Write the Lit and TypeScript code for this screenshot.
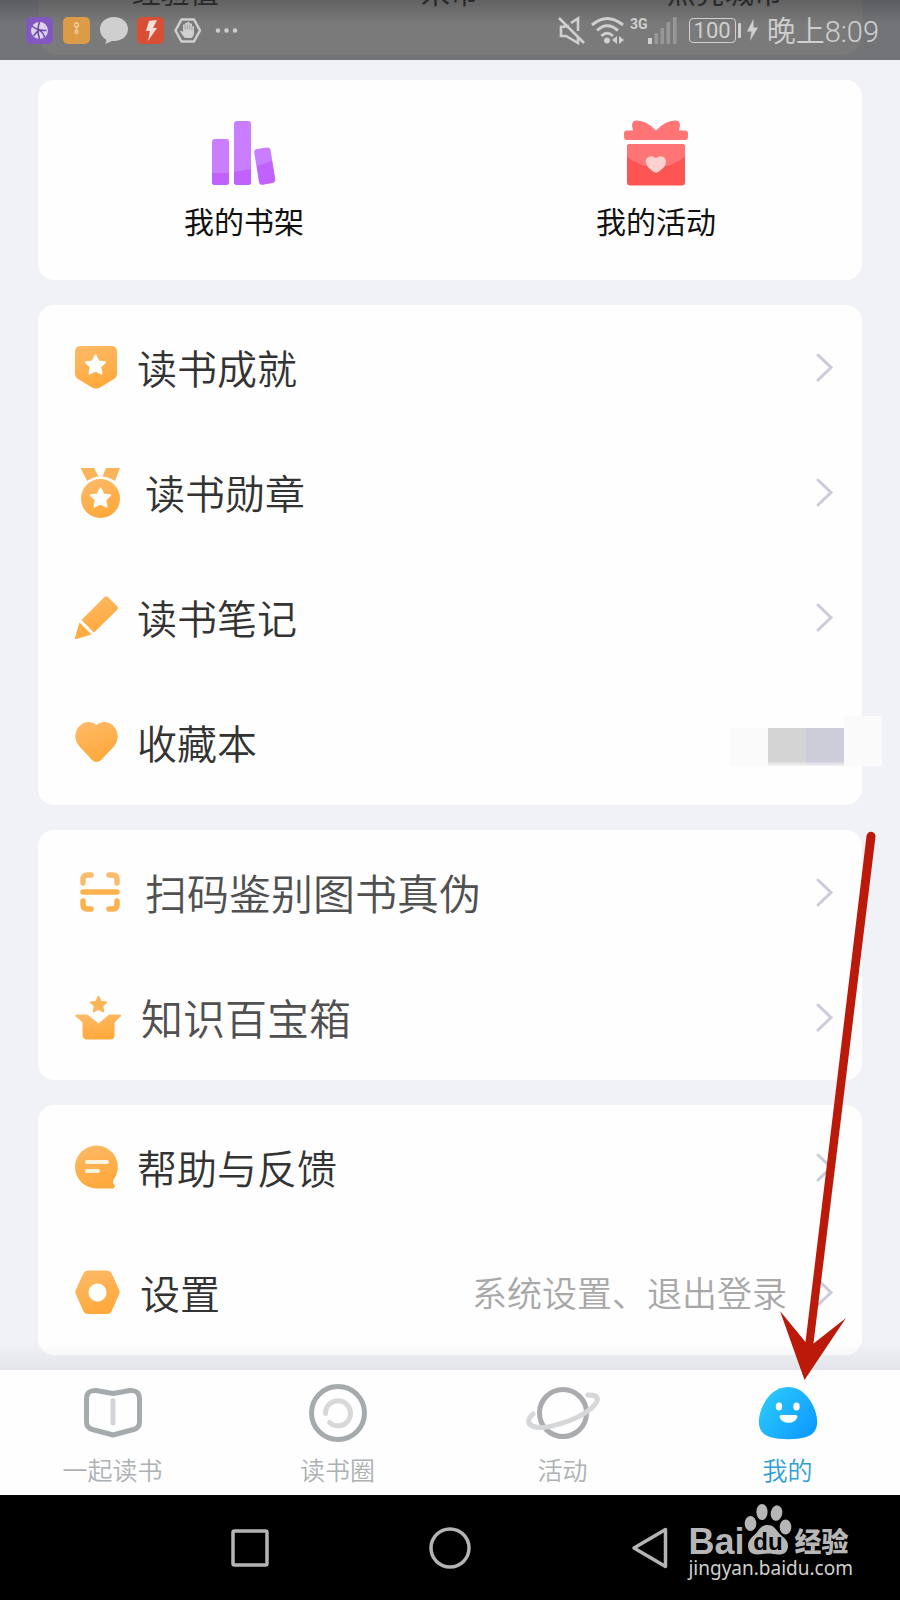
import { LitElement, html, css, svg, nothing, TemplateResult } from "lit";
import { customElement, state } from "lit/decorators.js";

interface Row {
  label: string;
  icon: TemplateResult;
  iconWidth: number;
  note?: string;
  masked?: boolean;
}

interface Section {
  tone: "dark" | "soft";
  rows: Row[];
}

const STAR =
  "M0 -9.5L3 -3.6 9.6 -2.8 4.8 1.8 6 8.6 0 5.4 -6 8.6 -4.8 1.8 -9.6 -2.8 -3 -3.6Z";

const badge = svg`
  <path fill="url(#amber)" d="M5 3H37a5 5 0 0 1 5 5V31q0 3-3 5L25 44.500q-4 2-8 0L3 36q-3-2-3-5V8a5 5 0 0 1 5-5Z"/>
  <path class="star" transform="translate(20.500 22)" d=${STAR}/>`;
const medal = svg`
  <path fill="#fcb45c" d="M5.700 0H19L23.500 8.500Q17 9 12 13ZM31 0H45L40 13Q34 9 27.500 8.500Z"/>
  <circle fill="url(#amber)" cx="25.500" cy="30.500" r="19.500"/>
  <path class="star" transform="translate(25.500 30)" d=${STAR}/>`;
const pencil = svg`
  <path fill="url(#amber)" d="M29 4.500q2-2.500 4.500 0L42 13q2 2 0 4L19 39.500 6.500 27Z"/>
  <path fill="#ffac45" d="M4.500 29.500 16.500 41.500 1.500 46q-2 .300-1.500-1.500Z"/>`;
const heart = svg`
  <path fill="url(#amber)" d="M21.500 7C26 3 33 3 38 7.500 44.500 14 44 23 38.500 29L26 42q-4.500 4-9 0L5 29C-1 23-1.500 14 5 7.500 10 3 17 3 21.500 7Z"/>`;
const scan = svg`
  <g fill="none" stroke="#fbb24f" stroke-width="5.500" stroke-linecap="round" stroke-linejoin="round">
    <path stroke="#f9bb6c" d="M8 15v-3.500q0-4.500 4.500-4.500H16M34 7h3.500Q42 7 42 11.500V15"/>
    <path d="M8 24H42M8 33v3.500q0 4.500 4.500 4.500H16M34 41h3.500q4.500 0 4.500-4.500V33"/>
  </g>`;
const chest = svg`
  <path fill="#fcb659" stroke="#fcb659" stroke-width="2" stroke-linejoin="round" transform="translate(23.500 11.500) scale(.82)" d=${STAR}/>
  <path fill="url(#amber)" d="M1.500 21.500H11q1.500 0 2.500 1L23.500 30.500 33 22.500q1-1 2.500-1H45q2 1 0 2.500L39.500 29.500V42q0 4.500-4.500 4.500H12q-4.500 0-4.500-4.500V29.500L1.500 24q-2.500-1.500 0-2.500Z"/>`;
const speech = svg`
  <path fill="url(#amber)" d="M21.500 2.500a21.500 21.500 0 0 1 17 34.500q-1.500 2 .5 4.500t-1 4H21.500a21.500 21.500 0 0 1 0-43Z"/>
  <path fill="none" stroke="#fff4df" stroke-width="4" stroke-linecap="round" d="M12 19H32M12 28H23"/>`;
const nut = svg`
  <path fill="url(#amber)" fill-rule="evenodd" d="M13 2.500H32q3 0 4.500 2.500L44 21.500q1.500 2.500 0 5L36.500 43.500q-1.500 2.500-4.500 2.500H13q-3 0-4.500-2.500L1 26.500q-1.500-2.500 0-5L8.500 5Q10 2.500 13 2.500ZM22.500 15.500a9 9 0 1 0 .01 0Z"/>`;

const SECTIONS: Section[] = [
  {
    tone: "dark",
    rows: [
      { label: "读书成就", icon: badge, iconWidth: 42 },
      { label: "读书勋章", icon: medal, iconWidth: 50 },
      { label: "读书笔记", icon: pencil, iconWidth: 42 },
      { label: "收藏本", icon: heart, iconWidth: 42, masked: true },
    ],
  },
  {
    tone: "soft",
    rows: [
      { label: "扫码鉴别图书真伪", icon: scan, iconWidth: 50 },
      { label: "知识百宝箱", icon: chest, iconWidth: 46 },
    ],
  },
  {
    tone: "dark",
    rows: [
      { label: "帮助与反馈", icon: speech, iconWidth: 42 },
      { label: "设置", icon: nut, iconWidth: 45, note: "系统设置、退出登录" },
    ],
  },
];

const TABS = [
  {
    label: "一起读书",
    icon: svg`
      <g fill="none" stroke-width="5" stroke-linecap="round" stroke-linejoin="round">
        <path stroke="#a5abad" d="M38 10.500 21 7.500Q11.500 7 11.500 16V39q0 6 6 7.500L38 52 58.500 46.500q6-1.500 6-7.500V16Q64.500 7 55 7.500Z"/>
        <path stroke="#d3d6d8" d="M38 17.500V40"/>
      </g>`,
  },
  {
    label: "读书圈",
    icon: svg`
      <g fill="none" stroke-width="5" stroke-linecap="round">
        <circle stroke="#a5abad" cx="38" cy="30" r="26.500"/>
        <path stroke="#d6d8d9" d="M25.500 30.500a12.500 12.500 0 1 1 4 9"/>
      </g>`,
  },
  {
    label: "活动",
    icon: svg`
      <g fill="none" stroke-width="5" stroke-linecap="round">
        <circle stroke="#a9abae" cx="38" cy="30" r="23.500"/>
        <path stroke="#d6d7d9" d="M8 31C-4 42 10 49 34 41 63 33 80 16 69 12.500q-2-.500-6-.500"/>
      </g>`,
  },
  {
    label: "我的",
    icon: svg`
      <path fill="url(#sky)" d="M38 4C51 4 60 14 65 27 70 43 66 51 56 54 46 57 30 57 20 54 10 51 6 43 11 27 16 14 25 4 38 4Z"/>
      <g fill="#fff"><ellipse cx="29" cy="23.500" rx="3.200" ry="4"/><ellipse cx="46.500" cy="23.500" rx="3.200" ry="4"/>
      <path d="M31 32H45.500q2 0 2 2a9.500 8.500 0 0 1-18 0q0-2 1.500-2Z"/></g>`,
  },
];

@customElement("app-root")
export class AppRoot extends LitElement {
  @state() private active = "我的";

  static styles = css`
    :host {
      display: flex;
      flex-direction: column;
      position: relative;
      min-height: 100vh;
      background: #f1f2f7;
      font-family: Roboto, "Noto Sans CJK SC", sans-serif;
      overflow-x: hidden;
    }
    * { box-sizing: border-box; }
    a { color: inherit; text-decoration: none; }
    svg { display: block; flex: none; overflow: visible; }
    button { border: 0; padding: 0; background: none; }

    .status {
      display: grid;
      height: 60px;
      overflow: hidden;
      background: #737478;
    }
    .status > * { grid-area: 1 / 1; min-width: 0; }
    .stats {
      display: grid;
      grid-template-columns: repeat(3, 1fr);
      align-items: start;
      height: 55px;
      margin: 0 38px;
      border-radius: 0 0 20px 20px;
      background: #7a7a7a;
      color: #333;
      font-size: 29px;
      line-height: 30px;
      text-align: center;
    }
    .stats span { margin-top: -21px; }
    .system {
      display: flex;
      align-items: center;
      justify-content: space-between;
      padding: 0 21px 0 26px;
      background: linear-gradient(rgba(0, 0, 0, 0.2), rgba(0, 0, 0, 0) 24px);
      color: #cfcfcf;
    }
    .group { display: flex; align-items: center; gap: 10px; }
    .signals { gap: 6px; }
    .cell { display: flex; }
    .net { font-size: 14px; line-height: 14px; font-weight: 700; }
    .battery { display: flex; align-items: center; gap: 2px; margin-left: 6px; }
    .level {
      padding: 0 4px;
      border: 1px solid #cfcfcf;
      border-radius: 4px;
      font-size: 22px;
      line-height: 23px;
    }
    .nub { width: 3px; height: 15px; background: #cfcfcf; border-radius: 1px; }
    .clock { margin-left: 3px; padding-top: 4px; font-size: 29px; line-height: 34px; font-weight: 350; }

    main {
      display: flex;
      flex-direction: column;
      gap: 25px;
      flex: 1;
      padding: 20px 38px 15px;
    }
    .card { border-radius: 16px; background: #fefefe; }
    .shortcuts { display: grid; grid-template-columns: 1fr 1fr; }
    .shortcut {
      display: flex;
      flex-direction: column;
      align-items: center;
      gap: 17px;
      height: 200px;
      padding-top: 40px;
      color: #111;
      font-size: 30px;
      line-height: 40px;
    }
    .row {
      display: flex;
      align-items: center;
      position: relative;
      height: 125px;
      padding: 0 29px 0 37px;
      color: #333;
      font-size: 40px;
      line-height: 52px;
      font-weight: 350;
    }
    .soft .row { color: #505050; font-size: 42px; }
    .text { margin-left: 20px; padding-top: 6px; flex: 1; }
    .note { margin-right: 29px; padding-top: 6px; color: #a8a8a8; font-size: 35px; }
    .star { fill: #fff; stroke: #fff; stroke-width: 2px; stroke-linejoin: round; }
    .mask {
      display: flex;
      align-items: flex-end;
      position: absolute;
      top: 36px;
      right: -20px;
    }
    .mask i { width: 38px; height: 38px; background: #fafafa; }
    .mask .grey { background: linear-gradient(#d4d4d4 33px, #f6f6f6); }
    .mask .lilac { background: linear-gradient(#cdcdda 33px, #f4f4f8); }
    .mask .tall { height: 50px; }

    .tabs {
      display: grid;
      grid-template-columns: repeat(4, 1fr);
      position: relative;
      height: 125px;
      background: #fefefe;
    }
    .tabs::before {
      content: "";
      position: absolute;
      inset: auto 0 100% 0;
      height: 28px;
      background: linear-gradient(rgba(0, 0, 0, 0), rgba(0, 0, 0, 0.06));
    }
    .tab {
      display: flex;
      flex-direction: column;
      align-items: center;
      gap: 14px;
      padding-top: 13px;
      color: #adb1b3;
      font-size: 25px;
      line-height: 30px;
      font-weight: 350;
    }
    .tab.on { color: #2f9fd8; }

    .nav {
      display: flex;
      justify-content: center;
      align-items: center;
      position: relative;
      height: 105px;
      background: #000;
    }
    .nav button { display: flex; justify-content: center; width: 200px; }
    .brand {
      position: absolute;
      top: 7px;
      right: 47px;
      color: #b6b6b6;
    }
    .logo { display: flex; align-items: flex-end; height: 54px; }
    .bai, .du { font-family: "Liberation Sans", sans-serif; font-weight: 700; }
    .bai { font-size: 36px; line-height: 28px; }
    .du { font-size: 24px; fill: #000; }
    .jy {
      margin-left: 3px;
      font-family: "Noto Sans CJK SC", sans-serif;
      font-size: 27px;
      line-height: 30px;
      font-weight: 900;
    }
    .site {
      font-family: "Noto Sans", sans-serif;
      font-size: 19px;
      line-height: 24px;
      color: #d0d0d0;
    }
    .arrow { position: absolute; top: 830px; right: 20px; pointer-events: none; }
  `;

  private statusBar() {
    return html`<header class="status">
      <div class="stats"><span>经验值</span><span>米币</span><span>点亮城市</span></div>
      <div class="system">
        <div class="group">
          <svg width="27" height="27"><rect width="27" height="27" rx="5" fill="#8157c0"/><circle cx="13.500" cy="13.500" r="8.500" fill="#dcd3ea"/><path d="M6 9q6 5 14.500 4.500M13.500 5q-3 8 0 17M7.500 19q4-5 6-6 4 3 5 7" fill="none" stroke="#6b45a5" stroke-width="1.500"/></svg>
          <svg width="27" height="27"><rect width="27" height="27" rx="5" fill="#db9b47"/><g fill="none" stroke="#efd0a0" stroke-width="1.300"><circle cx="13.500" cy="8" r="2"/><path d="M13.500 10v3"/><circle cx="13.500" cy="15" r="1.500"/></g></svg>
          <svg width="27" height="27"><path fill="#cfcfcf" d="M14 0C22 0 28 5 28 12S22 24 14 24L12 24 5 27Q7 24 6 22.500 0 19 0 12C0 5 6 0 14 0Z"/></svg>
          <svg width="27" height="27"><rect width="27" height="27" rx="5" fill="#d94f35"/><path fill="#f1e0dc" d="M12 4 20 3 16 11H20L11 24 13 14H9Z"/></svg>
          <svg width="27" height="27"><path d="M7.500 2.500H20L26 13.500 20 24.500H7.500L1.500 13.500Z" fill="none" stroke="#cfcfcf" stroke-width="2.500" stroke-linejoin="round"/><path fill="#cfcfcf" d="M9.500 19.500 6 14.500q.500-1.500 3 .500V8q1-1.300 2 0V6.500q1-1.300 2.200 0V5.500q1.200-1.300 2.400 0V7q1.200-1.300 2.400 0V9.500q1-1 2 0V16.500q0 3-2.500 4.500H12Q10.500 21 9.500 19.500Z"/><path d="M11.200 8.500v4M13.300 7.500v5M15.700 7.500v5M18 9v4" stroke="#8d8d8d" stroke-width=".7"/></svg>
          <svg width="27" height="27" fill="#cfcfcf"><circle cx="7" cy="13.500" r="2.200"/><circle cx="15.500" cy="13.500" r="2.200"/><circle cx="24" cy="13.500" r="2.200"/></svg>
        </div>
        <div class="group signals">
          <svg width="27" height="27" fill="none" stroke="#cfcfcf" stroke-width="2.600"><path d="M1 1 26 26M11 9 3 10V19H8L20 26V20M13 6 20 1.500V14"/></svg>
          <svg width="33" height="27" fill="none" stroke="#cfcfcf" stroke-width="3"><path d="M1 8Q16-5 32 8M6 13.500Q16 4 27 13.500M10.500 19Q16 13.500 22 19"/><circle cx="16" cy="23.500" r="3" fill="#cfcfcf" stroke="none"/><path d="M26 19v8l-5-4ZM28 19v8l5-4Z" fill="#cfcfcf" stroke="none"/></svg>
          <div class="cell">
            <span class="net">3G</span>
            <svg width="29" height="27" fill="#979797"><rect y="21" width="4" height="6" fill="#cfcfcf"/><rect x="6.500" y="16" width="3.500" height="11"/><rect x="12.500" y="11" width="3.500" height="16"/><rect x="18.500" y="5" width="3.500" height="22"/><rect x="25" width="3.500" height="27"/></svg>
          </div>
          <div class="battery"><span class="level">100</span><span class="nub"></span></div>
          <svg width="11" height="22" fill="#cfcfcf"><path d="M6.500 0 0 12.500H4.500L3 22 11 8.500H6.500Z"/></svg>
          <span class="clock">晚上8:09</span>
        </div>
      </div>
    </header>`;
  }

  private row(r: Row) {
    return html`<a class="row" href="#">
      <svg width=${r.iconWidth} height="50" aria-hidden="true">${r.icon}</svg>
      <span class="text">${r.label}</span>
      ${r.note ? html`<span class="note">${r.note}</span>` : nothing}
      ${r.masked
        ? html`<span class="mask"><i></i><i class="grey"></i><i class="lilac"></i><i class="tall"></i></span>`
        : html`<svg width="17" height="28" fill="none" stroke="#cbccda" stroke-width="3" stroke-linecap="round"><path d="M2 1 15 13.500 2 26"/></svg>`}
    </a>`;
  }

  render() {
    return html`
      ${this.statusBar()}
      <main>
        <section class="card shortcuts">
          <a class="shortcut" href="#">
            <svg width="64" height="66">
              <g fill="#c97dff"><rect y="19" width="17" height="46" rx="3"/><rect x="22" y="1" width="17" height="64" rx="3"/><rect x="44.500" y="28" width="16.500" height="36" rx="3" transform="rotate(-9 53 46)"/></g>
              <path fill="#c062fb" d="M0 53H17V62q0 3-3 3H3q-3 0-3-3ZM22 52 39 49V62q0 3-3 3H25q-3 0-3-3ZM45 46 60 41 63 59q.500 3-2 3.500L51 64.500q-3 .500-3.500-2Z"/>
            </svg>
            <span>我的书架</span>
          </a>
          <a class="shortcut" href="#">
            <svg width="64" height="66">
              <path fill="#ff7474" d="M3 10.500H9Q6 1 12 0.500 22 0 32 10.500 42 0 52 .500 58 1 55 10.500H61q3 0 3 3V17q0 3-3 3H3q-3 0-3-3V13.500q0-3 3-3Z"/>
              <path fill="#ff5454" d="M6 24H58q3 0 3 3V62q0 3.500-3 3.500H6q-3 0-3-3.500V27q0-3 3-3Z"/>
              <path fill="#ff7474" d="M6 24H58q3 0 3 3V37Q48 47 32 47T3 37V27q0-3 3-3Z"/>
              <path fill="#ffd0d0" d="M32 38q4-3 7.500-1t2 7.500Q39 50 32 53 25 50 22.500 44.500T24.500 37q3.500-2 7.500 1Z"/>
            </svg>
            <span>我的活动</span>
          </a>
        </section>
        ${SECTIONS.map((s) => html`<section class="card ${s.tone}">${s.rows.map((r) => this.row(r))}</section>`)}
      </main>

      <nav class="tabs">
        ${TABS.map(
          (t) => html`<a class="tab ${t.label === this.active ? "on" : ""}" href="#" @click=${() => (this.active = t.label)}>
            <svg width="76" height="60" aria-hidden="true">${t.icon}</svg>
            <span>${t.label}</span>
          </a>`
        )}
      </nav>

      <footer class="nav">
        <button aria-label="最近任务"><svg width="38" height="38"><rect x="2" y="2" width="34" height="34" rx="1.500" fill="none" stroke="#b4b4b4" stroke-width="3.500"/></svg></button>
        <button aria-label="主屏幕"><svg width="42" height="42"><circle cx="21" cy="21" r="19" fill="none" stroke="#b4b4b4" stroke-width="3.500"/></svg></button>
        <button aria-label="返回"><svg width="36" height="42"><path d="M2 21 33.500 2.500V39.500Z" fill="none" stroke="#b4b4b4" stroke-width="3.500" stroke-linejoin="round"/></svg></button>
        <div class="brand">
          <div class="logo">
            <span class="bai">Bai</span>
            <svg width="47" height="54" fill="#b6b6b6">
              <ellipse cx="6.500" cy="21.500" rx="5.800" ry="7.500"/><ellipse cx="18" cy="10" rx="5.600" ry="8"/><ellipse cx="32.500" cy="11" rx="5.800" ry="7.800" transform="rotate(10 32 11)"/><ellipse cx="41.500" cy="25" rx="5.800" ry="7.500"/>
              <path d="M23.500 23C29 23 31 26 34 30 38 35 44 37 44 44 44 50 40 52.500 35 52.500 30 52.500 28 51.500 24 51.500S17 52.500 13 52.500C7 52.500 4 49 4 43.500 4 37 10 34 13.500 29.500 16 26 18.500 23 23.500 23Z"/>
              <text class="du" x="24" y="48" text-anchor="middle">du</text>
            </svg>
            <span class="jy">经验</span>
          </div>
          <div class="site">jingyan.baidu.com</div>
        </div>
      </footer>

      <svg class="arrow" width="100" height="552" aria-hidden="true">
        <defs>
          <linearGradient id="amber" x1="0" y1="0" x2="0.400" y2="1"><stop offset="0" stop-color="#fdbb6a"/><stop offset="1" stop-color="#ffa93c"/></linearGradient>
          <linearGradient id="sky" x1="0" y1="0" x2="1" y2="0.700"><stop offset="0" stop-color="#2fd0fa"/><stop offset="1" stop-color="#0f9cff"/></linearGradient>
        </defs>
        <path fill="#bb1a0a" d="M86.500 6a4.500 4.500 0 0 1 9 .500L33.500 513.500 66 488 24.500 550 0 481 25.500 512Z"/>
      </svg>
    `;
  }
}
